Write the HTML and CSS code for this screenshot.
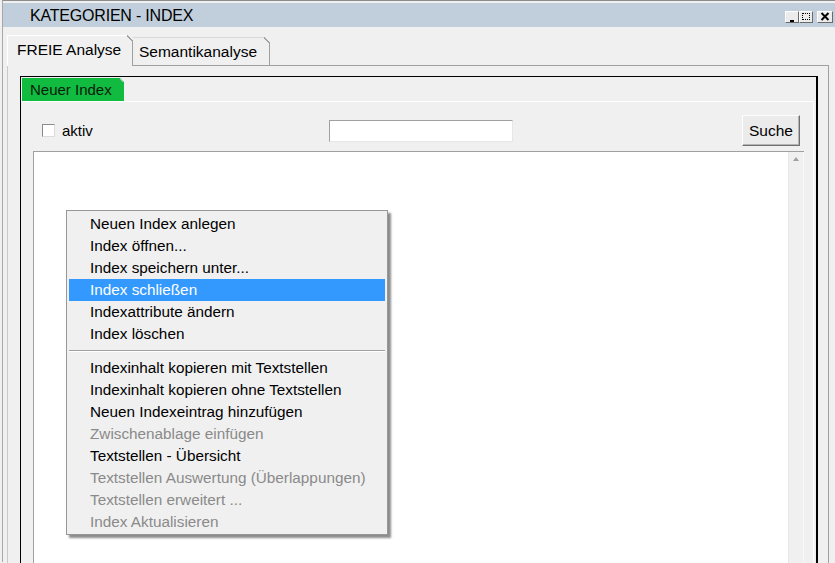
FILE: index.html
```html
<!DOCTYPE html>
<html lang="de">
<head>
    <meta charset="UTF-8">
    <title>Kategorien - Index</title>
    <link rel="stylesheet" href="styles.css">
</head>
<body>
    <div class="window">
        <div class="titlebar">
            <span class="title">KATEGORIEN - INDEX</span>
            <div class="win-buttons">
                <span class="wbtn wbtn-min"></span>
                <span class="wbtn wbtn-max"></span>
                <span class="wbtn wbtn-close">
                    <svg width="10" height="9" viewBox="0 0 10 9"><path d="M1.5 1 L8.5 8 M8.5 1 L1.5 8" stroke="#000" stroke-width="2"/></svg>
                </span>
            </div>
        </div>

        <div class="tabs">
            <div class="tab-strip">
                <div class="tab tab-active">FREIE Analyse</div>
                <div class="tab tab-second">Semantikanalyse</div>
            </div>
            <div class="tab-pane">
                <div class="panel">
                    <div class="inner-strip">
                        <div class="tab-green">Neuer Index</div>
                    </div>
                    <div class="inner-pane">
                        <div class="toolbar">
                            <label class="check"><span class="check-box"></span>aktiv</label>
                            <span class="search"></span>
                            <span class="btn">Suche</span>
                        </div>
                        <div class="list">
                            <div class="list-body"></div>
                            <div class="scrollbar"><span class="arrow-up"></span></div>
                        </div>
                    </div>
                </div>
            </div>
        </div>

        <!-- Kontextmenü -->
        <ul class="context-menu">
            <li>Neuen Index anlegen</li>
            <li>Index öffnen...</li>
            <li>Index speichern unter...</li>
            <li class="selected">Index schließen</li>
            <li>Indexattribute ändern</li>
            <li>Index löschen</li>
            <li class="separator"></li>
            <li>Indexinhalt kopieren mit Textstellen</li>
            <li>Indexinhalt kopieren ohne Textstellen</li>
            <li>Neuen Indexeintrag hinzufügen</li>
            <li class="disabled">Zwischenablage einfügen</li>
            <li>Textstellen - Übersicht</li>
            <li class="disabled">Textstellen Auswertung (Überlappungen)</li>
            <li class="disabled">Textstellen erweitert ...</li>
            <li class="disabled">Index Aktualisieren</li>
        </ul>
    </div>
</body>
</html>
```

FILE: styles.css
```css
body {
    margin: 0;
    height: 563px;
    overflow: hidden;
    background-color: #f0f0f0;
    font-family: "Liberation Sans", Arial, sans-serif;
    font-size: 15px;
    color: #000;
}
.window {
    position: relative;
    height: 562px;
    margin-left: 2px;
    padding-top: 2px;
    border-top: 1px solid #8c8c8c;
    border-left: 1px solid #a8a8a8;
    box-sizing: border-box;
}
.titlebar {
    display: flex;
    align-items: center;
    justify-content: space-between;
    height: 24px;
    padding: 0 2px 0 27px;
    background-color: #c1cedb;
}
.title {
    font-size: 16px;
    letter-spacing: -0.2px;
    padding-top: 1px;
}
.win-buttons {
    display: flex;
    align-items: center;
    margin-top: 3px;
}
.wbtn {
    position: relative;
    display: flex;
    align-items: center;
    justify-content: center;
    width: 14px;
    height: 12px;
    box-sizing: border-box;
    background-color: #ececec;
    border: 1px solid;
    border-color: #fff #6a6a6a #6a6a6a #fff;
}
.wbtn-min::after {
    content: "";
    position: absolute;
    left: 4px;
    bottom: 1px;
    width: 4px;
    height: 1px;
    background-color: #000;
    box-shadow: 0 1px 0 #000;
}
.wbtn-max::after {
    content: "";
    width: 8px;
    height: 7px;
    border: 1px dotted #000;
    box-sizing: border-box;
}
.wbtn-close {
    width: 16px;
    margin-left: 4px;
}

/* Tabs oben */
.tabs {
    margin: 8px 0 0 4px;
    width: 822px;
}
.tab-strip {
    display: flex;
    align-items: flex-end;
    height: 30px;
}
.tab {
    position: relative;
    box-sizing: border-box;
    height: 28px;
    padding-top: 5px;
    border: 1px solid #a0a0a0;
    border-bottom: none;
    border-left-color: #d0d0d0;
    border-top-color: #d8d8d8;
    font-size: 15.5px;
}
.tab::after {
    content: "";
    position: absolute;
    top: -1px;
    right: -1px;
    width: 6px;
    height: 6px;
    background: linear-gradient(to bottom left, #f0f0f0 44%, #a0a0a0 44%, #a0a0a0 62%, transparent 62%);
}
.tab-active {
    z-index: 1;
    width: 126px;
    height: 31px;
    margin-bottom: -1px;
    padding: 5px 0 0 9px;
    background-color: #f0f0f0;
    border-left-color: #fff;
    border-top-color: #fff;
}
.tab-second {
    width: 138px;
    margin-left: -1px;
    padding-left: 6px;
}
.tab-pane {
    height: 520px;
    box-sizing: border-box;
    padding: 10px 10px 0 12px;
    border: 1px solid #a0a0a0;
    border-left-color: #c8c8c8;
    border-bottom: none;
}
.panel {
    height: 100%;
    box-sizing: border-box;
    border: 1px solid #000;
    border-right-width: 2px;
    border-bottom: none;
    display: flex;
    flex-direction: column;
}
.inner-strip {
    display: flex;
    padding: 1px 0 0 1px;
}
.tab-green {
    position: relative;
    width: 102px;
    height: 23px;
    box-sizing: border-box;
    padding: 3px 0 0 8px;
    background-color: #10bb40;
    color: #0a1a0a;
}
.tab-green::after {
    content: "";
    position: absolute;
    top: 0;
    right: 0;
    width: 4px;
    height: 4px;
    background: linear-gradient(to bottom left, #f0f0f0 45%, #9ac9a4 45%, #9ac9a4 65%, transparent 65%);
}
.inner-pane {
    flex: 1;
    margin: 0 2px 0 1px;
    padding: 0 9px 0 11px;
    border-top: 1px solid #fff;
    border-right: 1px solid #fff;
    display: flex;
    flex-direction: column;
}
.toolbar {
    display: grid;
    grid-template-columns: 1fr auto 1fr;
    align-items: center;
    height: 32px;
    margin: 12px 0 5px;
}
.check {
    display: flex;
    align-items: center;
    padding-left: 9px;
}
.check-box {
    width: 11px;
    height: 11px;
    margin-right: 7px;
    background-color: #fff;
    border: 1px solid;
    border-color: #8a8a8a #dcdcdc #dcdcdc #8a8a8a;
}
.search {
    width: 184px;
    height: 22px;
    box-sizing: border-box;
    margin: 1px 0 0 4px;
    background-color: #fff;
    border: 1px solid;
    border-color: #a0a0a0 #e6e6e6 #e6e6e6 #a0a0a0;
}
.btn {
    justify-self: end;
    width: 58px;
    height: 31px;
    box-sizing: border-box;
    margin-right: 4px;
    padding-top: 6px;
    text-align: center;
    font-size: 15.5px;
    background-color: #ebebeb;
    border: 1px solid;
    border-color: #fdfdfd #707070 #707070 #fdfdfd;
    box-shadow: inset -1px -1px 0 #b4b4b4;
}
.list {
    flex: 1;
    display: flex;
    border-top: 1px solid #a0a0a0;
    border-left: 1px solid #a0a0a0;
}
.list-body {
    flex: 1;
    background-color: #fff;
}
.scrollbar {
    position: relative;
    width: 16px;
    box-sizing: border-box;
    background-color: #f0f0f0;
    border-left: 1px solid #e6e6e6;
    border-right: 1px solid #f8f8f8;
}
.arrow-up {
    position: absolute;
    top: 5px;
    left: 4px;
    width: 0;
    height: 0;
    border-left: 3.5px solid transparent;
    border-right: 3.5px solid transparent;
    border-bottom: 4px solid #a0a0a0;
}

/* Kontextmenü */
.context-menu {
    position: absolute;
    left: 63px;
    top: 209px;
    width: 322px;
    margin: 0;
    padding: 2px 2px 1px;
    box-sizing: border-box;
    list-style: none;
    font-size: 15.3px;
    background-color: #f0f0f0;
    border: 1px solid #979797;
    box-shadow: 3px 3px 2px rgba(0, 0, 0, 0.45);
}
.context-menu li {
    height: 22px;
    line-height: 22px;
    padding-left: 21px;
    white-space: nowrap;
}
.context-menu li.selected {
    background-color: #3399ff;
    color: #fff;
}
.context-menu li.disabled {
    color: #8a8a8a;
}
.context-menu li.separator {
    height: 12px;
    padding: 0;
    background: linear-gradient(#f0f0f0 5px, #a0a0a0 5px, #a0a0a0 6px, #fff 6px, #fff 7px, #f0f0f0 7px);
}
```
